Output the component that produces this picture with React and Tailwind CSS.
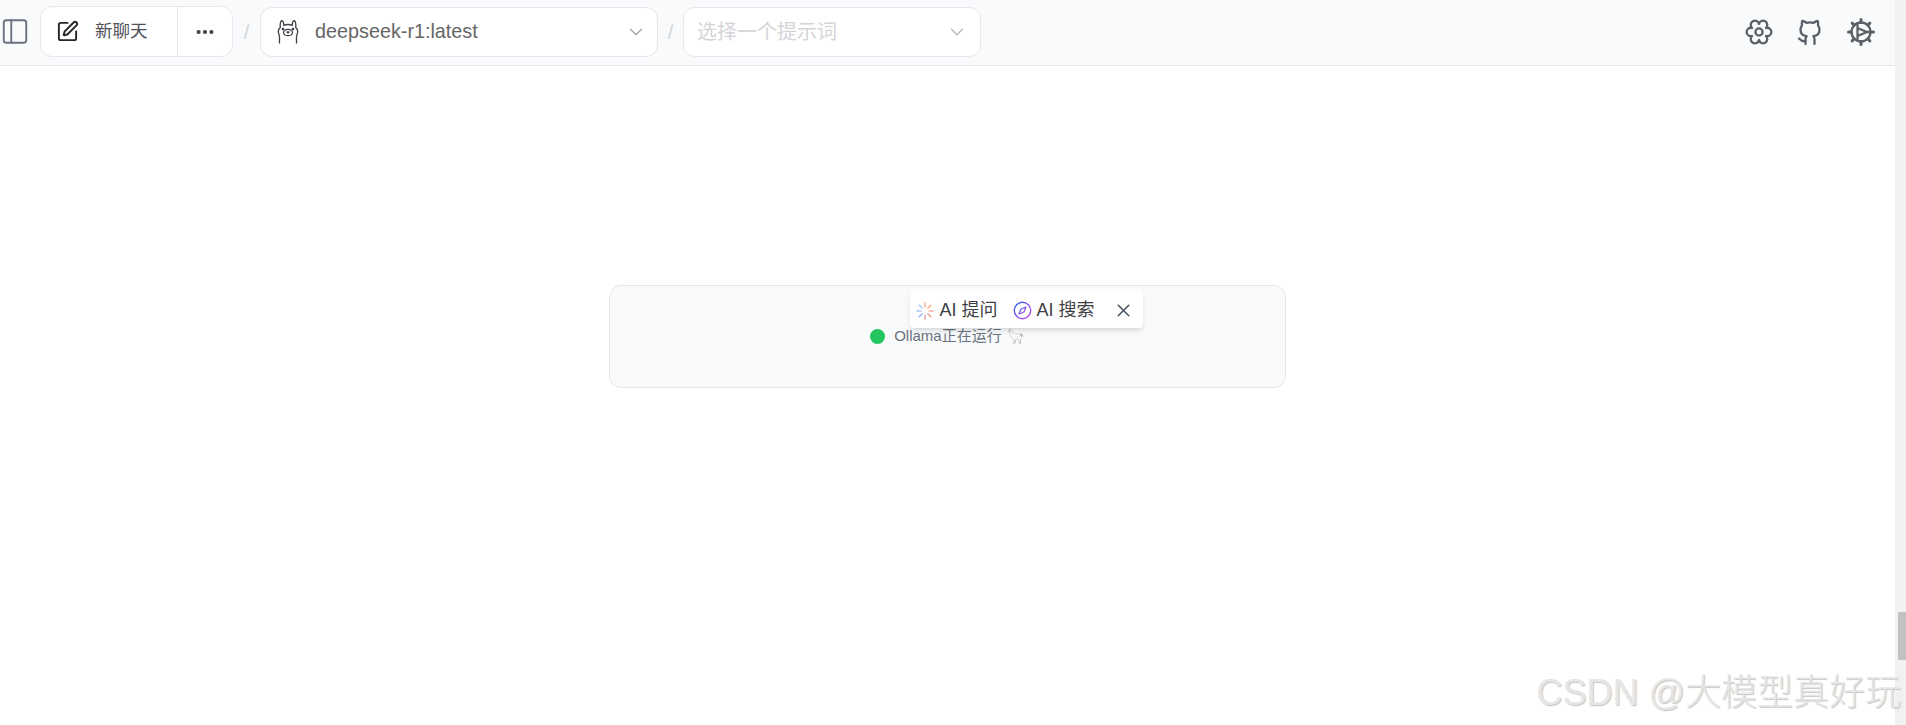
import React from "react";
import { PanelLeft, SquarePen, Ellipsis, ChevronDown, X } from "lucide-react";

function OllamaIcon() {
  return (
    <svg width="24" height="26" viewBox="0 0 24 26" fill="none" stroke="#3f3f46" strokeWidth="1.300" strokeLinecap="round" strokeLinejoin="round">
      <path d="M3.500 24v-6c0-2-1.200-3-1.200-5.500 0-2 .9-3.400 2-4.300C4 5.500 4.300 2.500 5.800 1.500c1.500.8 2 3 2 5 1.300-.7 2.800-1 4.200-1s2.900.3 4.200 1c0-2 .5-4.200 2-5 1.500 1 1.800 4 1.500 6.700 1.100.9 2 2.300 2 4.300 0 2.500-1.200 3.500-1.200 5.500v6" />
      <ellipse cx="12" cy="13.500" rx="4.500" ry="3.200" />
      <circle cx="7" cy="10" r=".7" fill="#3f3f46" />
      <circle cx="17" cy="10" r=".7" fill="#3f3f46" />
      <path d="M11 13h2l-1 1z" fill="#3f3f46" />
    </svg>
  );
}

function FlowerGear() {
  return (
    <svg width="30" height="30" viewBox="0 0 30 30" fill="none" stroke="#5b6068" strokeWidth="2.300" strokeLinecap="round" strokeLinejoin="round">
      <path d="M15 7A4.200 4.200 0 1 1 21.930 11A4.200 4.200 0 1 1 21.930 19A4.200 4.200 0 1 1 15 23A4.200 4.200 0 1 1 8.070 19A4.200 4.200 0 1 1 8.070 11A4.200 4.200 0 1 1 15 7Z" />
      <circle cx="15" cy="15" r="3.600" />
    </svg>
  );
}

function GithubIcon() {
  return (
    <svg width="30" height="30" viewBox="0 0 30 30" fill="none" stroke="#5b6068" strokeWidth="2.300" strokeLinecap="round" strokeLinejoin="round">
      <path d="M10.500 27v-4.500c0-1.500.4-2.500 1.200-3.300-3.800-.4-6.200-2.200-6.200-6.700 0-1.500.5-2.900 1.500-4-.3-1.500-.3-3 .2-4.500 0 0 1.600-.1 4.300 1.800a15 15 0 0 1 7 0C21.200 3.900 22.800 4 22.800 4c.5 1.500.5 3 .2 4.500 1 1.100 1.500 2.500 1.500 4 0 4.500-2.400 6.300-6.200 6.700.8.800 1.200 2 1.200 3.300V27" />
      <path d="M10.500 24c-3.500 1-5-.8-6.500-2.500" />
    </svg>
  );
}

function PlayGear() {
  const teeth = [0, 45, 90, 135, 180, 225, 270, 315];
  return (
    <svg width="30" height="30" viewBox="0 0 30 30" fill="none" stroke="#5b6068" strokeWidth="2.300" strokeLinecap="round" strokeLinejoin="round">
      <circle cx="15" cy="15" r="9.500" />
      {teeth.map((a) => (
        <path key={a} d="M15 5.500V2.500" strokeWidth="3" transform={`rotate(${a} 15 15)`} />
      ))}
      <path d="M11.500 6.500v17M11.500 11l9.500 4-9.500 4" />
      <path d="M21 15h3" />
    </svg>
  );
}

function SparkIcon() {
  const rays = [
    [0, "#f59e6b"],
    [45, "#f59e6b"],
    [90, "#f28a7a"],
    [135, "#f28a7a"],
    [180, "#e98aa5"],
    [225, "#7fb2f5"],
    [270, "#7fb2f5"],
    [315, "#93c5fd"],
  ];
  return (
    <svg width="18" height="18" viewBox="0 0 18 18" fill="none" strokeWidth="1.200" strokeLinecap="round">
      {rays.map(([a, c]) => (
        <path key={a} d="M9 .8V5" stroke={c} transform={`rotate(${a} 9 9)`} />
      ))}
    </svg>
  );
}

function CompassIcon() {
  return (
    <svg width="19" height="19" viewBox="0 0 19 19" fill="none">
      <defs>
        <linearGradient id="compass" x1="0" y1="0" x2="1" y2="1">
          <stop offset="0" stopColor="#2563eb" />
          <stop offset="1" stopColor="#d946ef" />
        </linearGradient>
      </defs>
      <circle cx="9.500" cy="9.500" r="8.200" stroke="url(#compass)" strokeWidth="1.400" />
      <path d="M13 6l-2 5-5 2 2-5z" stroke="url(#compass)" strokeWidth="1.200" strokeLinejoin="round" />
    </svg>
  );
}

export default function App() {
  return (
    <div className="relative flex h-[725px] w-full overflow-hidden bg-white font-['Liberation_Sans','Noto_Sans_CJK_SC',sans-serif]">
      <div className="min-w-0 flex-1">
        {/* Header */}
        <header className="flex h-[66px] items-center border-b border-gray-200 bg-[#f9fafb] pb-[2px]">
          <button className="flex w-[30px] shrink-0 justify-center text-[#6b7280]">
            <PanelLeft size={31} strokeWidth={1.500} />
          </button>
          <div className="ml-[10px] flex h-[51px] w-[193px] rounded-xl border border-gray-200 bg-white">
            <div className="flex w-[137px] items-center border-r border-gray-200 pl-[15px]">
              <SquarePen size={23} strokeWidth={2} className="text-[#27272a]" />
              <span className="ml-[16px] text-[17.500px] text-[#52525b]">新聊天</span>
            </div>
            <div className="flex flex-1 items-center justify-center text-[#3f3f46]">
              <Ellipsis size={22} strokeWidth={2.500} />
            </div>
          </div>
          <span className="w-[27px] text-center text-[20px] text-gray-300">/</span>
          <div className="flex h-[50px] w-[398px] items-center rounded-xl border border-gray-200 bg-white pl-[15px] pr-[10px]">
            <OllamaIcon />
            <span className="ml-[15px] flex-1 text-[19.800px] text-[#666666]">deepseek-r1:latest</span>
            <ChevronDown size={22} strokeWidth={1.300} className="text-[#a1a1aa]" />
          </div>
          <span className="w-[25px] text-center text-[20px] text-gray-300">/</span>
          <div className="flex h-[50px] w-[298px] items-center rounded-xl border border-gray-200 bg-white pl-[13px] pr-[12px]">
            <span className="flex-1 text-[20px] text-[#d4d4d8]">选择一个提示词</span>
            <ChevronDown size={22} strokeWidth={1.300} className="text-[#b4b4bb]" />
          </div>
          <div className="ml-auto mr-[19px] flex items-center gap-[21px]">
            <FlowerGear />
            <GithubIcon />
            <PlayGear />
          </div>
        </header>

        {/* Status card */}
        <div className="flex justify-center pt-[219px]">
          <div className="relative ml-[-1px] flex h-[103px] w-[677px] items-center justify-center rounded-xl border border-gray-200 bg-[#f9fafb]">
            <div className="flex items-center pl-[1px]">
              <span className="h-[15px] w-[15px] rounded-full bg-[#22c55e]" />
              <span className="ml-[9px] text-[15px] text-[#6b7280]">
                Ollama正在运行 <span className="opacity-60 grayscale">🦙</span>
              </span>
            </div>
            {/* Selection popup */}
            <div className="absolute left-[300px] top-[5px] flex h-[37px] w-[233px] items-center rounded bg-white pl-[6px] pt-[2px] text-[18px] text-[#3f3f46] shadow-md">
              <SparkIcon />
              <span className="ml-[6px]">AI 提问</span>
              <span className="ml-[15px]"><CompassIcon /></span>
              <span className="ml-[5px]">AI 搜索</span>
              <X size={21} strokeWidth={1.800} className="ml-[18px] text-[#4b5563]" />
            </div>
          </div>
        </div>
      </div>

      {/* Scrollbar */}
      <div className="flex w-[11px] flex-col bg-[#f1f1f1] pl-[3px] pt-[612px]">
        <div className="h-[48px] bg-[#c1c1c1]" />
      </div>

      {/* CSDN watermark */}
      <div className="absolute bottom-[14px] right-[5px] text-[36px] font-light leading-none text-[#e6e6e6] [text-shadow:1px_1px_1px_#c4c4c4]">
        CSDN @大模型真好玩
      </div>
    </div>
  );
}
